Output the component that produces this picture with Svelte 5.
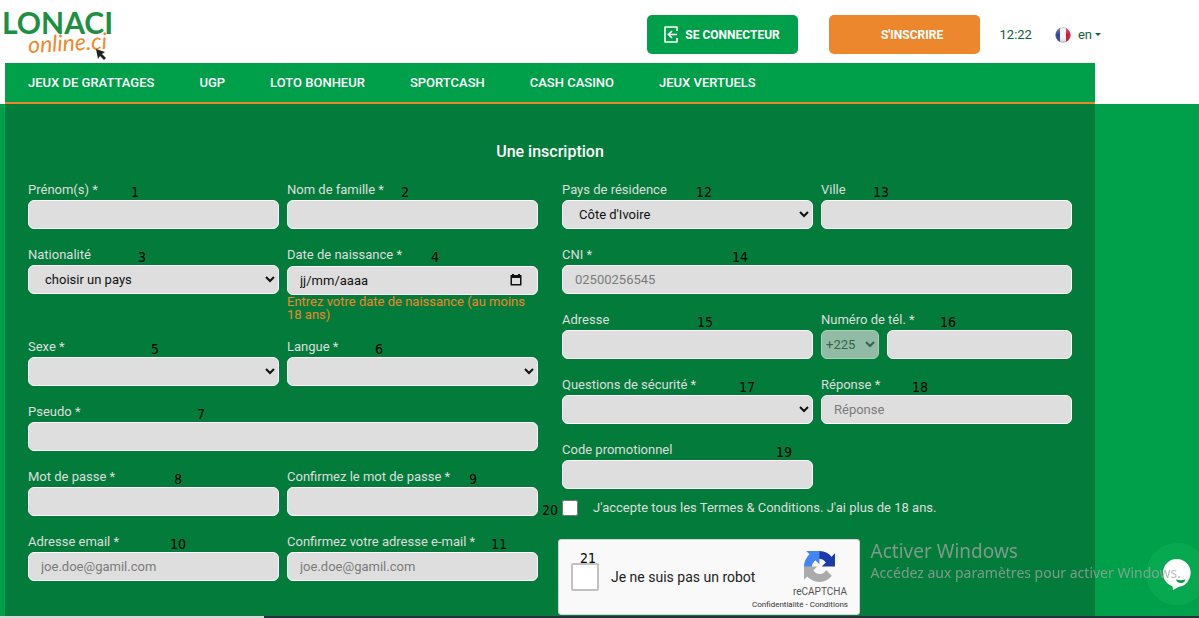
<script lang="ts">
	type Field = {
		id: string;
		label: string;
		kind?: 'text' | 'select' | 'date' | 'phone' | 'password' | 'email';
		placeholder?: string;
		option?: string;
		hint?: string;
		wide?: boolean;
		mark: number;
		markX: number;
	};

	const menu = [
		'JEUX DE GRATTAGES',
		'UGP',
		'LOTO BONHEUR',
		'SPORTCASH',
		'CASH CASINO',
		'JEUX VERTUELS'
	];

	const identity: Field[] = [
		{ id: 'prenom', label: 'Prénom(s) *', mark: 1, markX: 103 },
		{ id: 'nom', label: 'Nom de famille *', mark: 2, markX: 114 },
		{ id: 'nationalite', label: 'Nationalité', kind: 'select', option: 'choisir un pays', mark: 3, markX: 110 },
		{
			id: 'naissance',
			label: 'Date de naissance *',
			kind: 'date',
			hint: 'Entrez votre date de naissance (au moins 18 ans)',
			mark: 4,
			markX: 144
		},
		{ id: 'sexe', label: 'Sexe *', kind: 'select', option: '', mark: 5, markX: 123 },
		{ id: 'langue', label: 'Langue *', kind: 'select', option: '', mark: 6, markX: 88 },
		{ id: 'pseudo', label: 'Pseudo *', wide: true, mark: 7, markX: 169 },
		{ id: 'mdp', label: 'Mot de passe *', kind: 'password', mark: 8, markX: 146 },
		{ id: 'mdp2', label: 'Confirmez le mot de passe *', kind: 'password', mark: 9, markX: 182 },
		{ id: 'email', label: 'Adresse email *', kind: 'email', placeholder: 'joe.doe@gamil.com', mark: 10, markX: 142 },
		{ id: 'email2', label: 'Confirmez votre adresse e-mail *', kind: 'email', placeholder: 'joe.doe@gamil.com', mark: 11, markX: 204 }
	];

	const contact: Field[] = [
		{ id: 'pays', label: 'Pays de résidence', kind: 'select', option: "Côte d'Ivoire", mark: 12, markX: 134 },
		{ id: 'ville', label: 'Ville', mark: 13, markX: 52 },
		{ id: 'cni', label: 'CNI *', placeholder: '02500256545', wide: true, mark: 14, markX: 170 },
		{ id: 'adresse', label: 'Adresse', mark: 15, markX: 135 },
		{ id: 'tel', label: 'Numéro de tél. *', kind: 'phone', mark: 16, markX: 119 },
		{ id: 'question', label: 'Questions de sécurité *', kind: 'select', option: '', mark: 17, markX: 177 },
		{ id: 'reponse', label: 'Réponse *', placeholder: 'Réponse', mark: 18, markX: 91 },
		{ id: 'promo', label: 'Code promotionnel', mark: 19, markX: 214 }
	];
</script>

{#snippet field(f: Field)}
	<div class="field" class:wide={f.wide}>
		<label for={f.id}>{f.label}</label>
		{#if f.kind === 'select'}
			<select id={f.id} class="control">
				<option>{f.option}</option>
			</select>
		{:else if f.kind === 'date'}
			<div class="date">
				<input id={f.id} class="control" type="text" value="jj/mm/aaaa" />
				<button type="button" aria-label="Ouvrir le calendrier">
					<svg viewBox="0 0 12 12" width="12" height="12">
						<path d="M2 0h2v1h4V0h2v1h1.500v10.500H.5V1H2zM2 4v6h8V4z" fill="#111" fill-rule="evenodd" />
					</svg>
				</button>
			</div>
		{:else if f.kind === 'phone'}
			<div class="phone">
				<select class="control prefix" aria-label="Indicatif" disabled>
					<option>+225</option>
				</select>
				<input id={f.id} class="control" type="tel" />
			</div>
		{:else}
			<input id={f.id} class="control" type={f.kind ?? 'text'} placeholder={f.placeholder} />
		{/if}
		{#if f.hint}
			<p class="hint">{f.hint}</p>
		{/if}
		<span class="mark" style="left: {f.markX}px">{f.mark}</span>
	</div>
{/snippet}

<div class="page">
	<header>
		<a class="logo" href="/" aria-label="Lonaci online.ci">
			<span class="brand">LONACI</span>
			<span class="online">online.ci</span>
			<svg class="cursor" viewBox="0 0 10 11" width="10" height="11">
				<path d="M0 0l9 3-3 2 4 4-2 2-4-4-2 3z" fill="#222" />
			</svg>
		</a>
		<div class="actions">
			<button class="btn login">
				<svg viewBox="0 0 14 17" width="14" height="17" fill="none" stroke="#fff" stroke-width="2">
					<path d="M13 5V1H1v15h12v-4" stroke-width="1.600" stroke-linejoin="round" />
					<path d="M13 8.500H5M8 5L4.500 8.500 8 12" stroke-width="1.700" />
				</svg>
				SE CONNECTEUR
			</button>
			<button class="btn signup">S'INSCRIRE</button>
			<time>12:22</time>
			<button class="lang">
				<svg viewBox="0 0 16 16" width="16" height="16">
					<defs>
						<clipPath id="disc"><circle cx="8" cy="8" r="7.500" /></clipPath>
						<linearGradient id="shade" x2="0" y2="1">
							<stop offset="0" stop-color="#fff" stop-opacity=".35" />
							<stop offset=".5" stop-color="#fff" stop-opacity="0" />
							<stop offset="1" stop-color="#334" stop-opacity=".2" />
						</linearGradient>
					</defs>
					<g clip-path="url(#disc)">
						<path d="M0 0h5v16H0z" fill="#2b459c" />
						<path d="M5 0h6v16H5z" fill="#f4f4f7" />
						<path d="M11 0h5v16h-5z" fill="#d3152f" />
						<path d="M0 0h16v16H0z" fill="url(#shade)" />
					</g>
					<circle cx="8" cy="8" r="7.300" fill="none" stroke="#777" stroke-opacity=".5" stroke-width=".8" />
				</svg>
				<span>en</span>
				<i class="caret"></i>
			</button>
		</div>
	</header>

	<nav>
		{#each menu as item}
			<a href="/">{item}</a>
		{/each}
	</nav>

	<main>
		<form class="panel">
			<h1>Une inscription</h1>
			<div class="columns">
				<div class="fields">
					{#each identity as f (f.id)}
						{@render field(f)}
					{/each}
				</div>
				<div>
					<div class="fields">
						{#each contact as f (f.id)}
							{@render field(f)}
						{/each}
					</div>
					<div class="terms">
						<input id="terms" type="checkbox" />
						<label for="terms">J'accepte tous les Termes &amp; Conditions. J'ai plus de 18 ans.</label>
						<span class="mark">20</span>
					</div>
					<div class="captcha">
						<input id="robot" type="checkbox" />
						<label for="robot">Je ne suis pas un robot</label>
						<div class="captcha-brand">
							<svg viewBox="0 0 64 64" width="31" height="31">
								<path fill="#1c3aa9" d="M64 31.955l-.033-1.37V4.687l-7.16 7.16C50.948 4.674 42.033.093 32.05.093c-10.4 0-19.622 4.96-25.458 12.64l11.736 11.86a15.55 15.55 0 0 1 4.754-5.334c2.05-1.6 4.952-2.906 8.968-2.906.485 0 .86.057 1.135.163 4.976.393 9.288 3.14 11.828 7.124l-8.307 8.307L64 31.953" />
								<path fill="#4285f4" d="M31.862.094l-1.37.033H4.594l7.16 7.16C4.58 13.147 0 22.06 0 32.046c0 10.4 4.96 19.622 12.64 25.458L24.5 45.768a15.55 15.55 0 0 1-5.334-4.754c-1.6-2.05-2.906-4.952-2.906-8.968 0-.485.057-.86.163-1.135.393-4.976 3.14-9.288 7.124-11.828l8.307 8.307L31.86.095" />
								<path fill="#ababab" d="M.001 32.045l.033 1.37v25.898l7.16-7.16c5.86 7.173 14.774 11.754 24.76 11.754 10.4 0 19.622-4.96 25.458-12.64l-11.736-11.86a15.55 15.55 0 0 1-4.754 5.334c-2.05 1.6-4.952 2.906-8.968 2.906-.485 0-.86-.057-1.135-.163-4.976-.393-9.288-3.14-11.828-7.124l8.307-8.307c-10.522.04-22.4.066-27.295-.005" />
							</svg>
							<span>reCAPTCHA</span>
						</div>
						<div class="captcha-links">
							<a href="/">Confidentialité</a> - <a href="/">Conditions</a>
						</div>
						<span class="mark">21</span>
					</div>
				</div>
			</div>
		</form>
	</main>
</div>

<button class="chat" aria-label="Chat">
	<svg viewBox="0 0 28 31" width="28" height="31">
		<path d="M14 0a14 14 0 0 1 2 27.800L10 31l-.5-3.700A14 14 0 0 1 14 0z" fill="#fff" />
		<path d="M13 20.500q5 1.500 9.500 0-.8 3.500-4.500 3.500-4 0-5-3.500z" fill="#00a04a" />
	</svg>
</button>

<div class="watermark">
	<strong>Activer Windows</strong>
	<span>Accédez aux paramètres pour activer Windows.</span>
</div>

<div class="taskbar"></div>

<style>
	:global(body) {
		background: #009f49;
		font-family: Roboto, 'Liberation Sans', sans-serif;
		font-size: 13px;
		overflow: hidden;
	}

	.page {
		display: flex;
		flex-direction: column;
		min-height: 100vh;
		background: #fff;
	}

	button {
		border: 0;
		padding: 0;
		font: inherit;
		cursor: pointer;
	}

	a {
		color: inherit;
		text-decoration: none;
	}

	header {
		display: flex;
		justify-content: space-between;
		height: 63px;
		padding: 0 98px 0 2px;
	}

	.logo {
		position: relative;
		width: 110px;
	}

	.brand {
		position: absolute;
		top: 4px;
		left: 0;
		color: #1f8f43;
		font: 700 30px/36px Lato, sans-serif;
	}

	.online {
		position: absolute;
		top: 31px;
		left: 26px;
		color: #ee8a2c;
		font: italic 23px/23px Lato, sans-serif;
		transform: rotate(-3deg);
	}

	.cursor {
		position: absolute;
		top: 49px;
		left: 94px;
	}

	.actions {
		display: flex;
		align-items: center;
		padding-top: 6px;
		color: #14603a;
	}

	.btn {
		display: flex;
		align-items: center;
		justify-content: center;
		width: 151px;
		height: 39px;
		border-radius: 5px;
		color: #fff;
		font-weight: 700;
		font-size: 12px;
	}

	.login {
		gap: 7px;
		margin-right: 31px;
		background: #009f49;
	}

	.signup {
		margin-right: 20px;
		padding-left: 16px;
		background: #ed872d;
	}

	time {
		margin-right: 23px;
	}

	.lang {
		display: flex;
		align-items: center;
		background: none;
		color: inherit;
	}

	.lang span {
		margin: 0 3px 0 7px;
	}

	.caret {
		border: 3px solid transparent;
		border-top-color: currentColor;
		border-bottom: 0;
	}

	nav {
		display: flex;
		align-items: center;
		gap: 45px;
		height: 39px;
		margin: 0 104px 0 5px;
		padding: 0 23px;
		border-bottom: 2px solid #ed872d;
		background: #009f49;
		color: #fff;
		font-weight: 500;
	}

	main {
		display: flex;
		flex: 1;
		padding: 0 104px 0 5px;
		background: #009f49;
	}

	.panel {
		flex: 1;
		padding: 38px 23px 0;
		background: #037c3b;
	}

	h1 {
		margin: 0 0 20px;
		color: #fff;
		font-weight: 500;
		font-size: 16px;
		line-height: 19px;
		text-align: center;
	}

	.columns {
		display: grid;
		grid-template-columns: 1fr 1fr;
		align-items: start;
		gap: 24px;
	}

	.fields {
		display: grid;
		grid-template-columns: 1fr 1fr;
		align-items: start;
		gap: 17px 8px;
	}

	.field {
		position: relative;
		min-width: 0;
	}

	.wide {
		grid-column: span 2;
	}

	label {
		color: #dedede;
		line-height: 17px;
	}

	.field label {
		display: block;
		margin-bottom: 2px;
	}

	.control {
		display: block;
		box-sizing: border-box;
		width: 100%;
		height: 29px;
		padding: 0 12px;
		border: 1px solid #fff;
		border-radius: 6px;
		background-color: #dedede;
		color: #111;
		font: inherit;
	}

	.control::placeholder {
		color: #7b7b7b;
	}

	.date {
		position: relative;
		margin-top: 3px;
	}

	.date button {
		position: absolute;
		top: 8px;
		right: 16px;
		width: 12px;
		height: 12px;
		background: none;
	}

	.date svg {
		display: block;
	}

	.hint {
		margin: 0;
		color: #ed872d;
		line-height: 13px;
	}

	.phone {
		display: flex;
		gap: 8px;
	}

	.prefix {
		flex: 0 0 58px;
		padding: 0;
		opacity: 0.65;
		color: #555;
	}

	.mark {
		position: absolute;
		top: 3px;
		color: #000;
		font: 14px/16px 'DejaVu Sans Condensed', 'DejaVu Sans', sans-serif;
	}

	.terms {
		position: relative;
		display: flex;
		align-items: center;
		gap: 15px;
		margin-top: 10px;
	}

	.terms input {
		width: 16px;
		height: 16px;
		margin: 0;
	}

	.terms .mark {
		left: -20px;
	}

	.captcha {
		position: relative;
		display: flex;
		align-items: center;
		box-sizing: border-box;
		width: 302px;
		height: 76px;
		margin: 23px 0 0 -4px;
		padding: 0 12px;
		border: 1px solid #d3d3d3;
		border-radius: 3px;
		background: #f9f9f9;
	}

	.captcha input {
		appearance: none;
		width: 28px;
		height: 28px;
		margin: 0 12px 0 0;
		border: 2px solid #c1c1c1;
		border-radius: 2px;
		background: #fff;
	}

	.captcha label {
		flex: 1;
		color: #222;
		font-size: 14px;
	}

	.captcha-brand {
		display: flex;
		flex-direction: column;
		align-items: center;
		gap: 4px;
		padding-bottom: 5px;
		color: #555;
		font-size: 10px;
		line-height: 12px;
	}

	.captcha-links {
		position: absolute;
		right: 11px;
		bottom: 4px;
		color: #333;
		font-size: 8px;
		line-height: 10px;
	}

	.captcha .mark {
		top: 10px;
		left: 21px;
	}

	.chat {
		position: fixed;
		right: -9px;
		bottom: 13px;
		display: flex;
		align-items: center;
		justify-content: center;
		width: 62px;
		height: 62px;
		border-radius: 50%;
		background: #06a850;
	}

	.watermark {
		position: fixed;
		right: 18px;
		bottom: 35px;
		color: rgba(165, 165, 165, 0.75);
		font-family: 'Noto Sans', 'Open Sans', sans-serif;
		pointer-events: none;
	}

	.watermark strong,
	.watermark span {
		display: block;
	}

	.watermark strong {
		font-weight: 400;
		font-size: 19px;
		line-height: 24px;
	}

	.watermark span {
		font-size: 14px;
		line-height: 20px;
	}

	.taskbar {
		position: fixed;
		right: 0;
		bottom: 0;
		left: 0;
		height: 2px;
		background: linear-gradient(90deg, #d8d8d8 22%, #26323a 22%);
	}
</style>
